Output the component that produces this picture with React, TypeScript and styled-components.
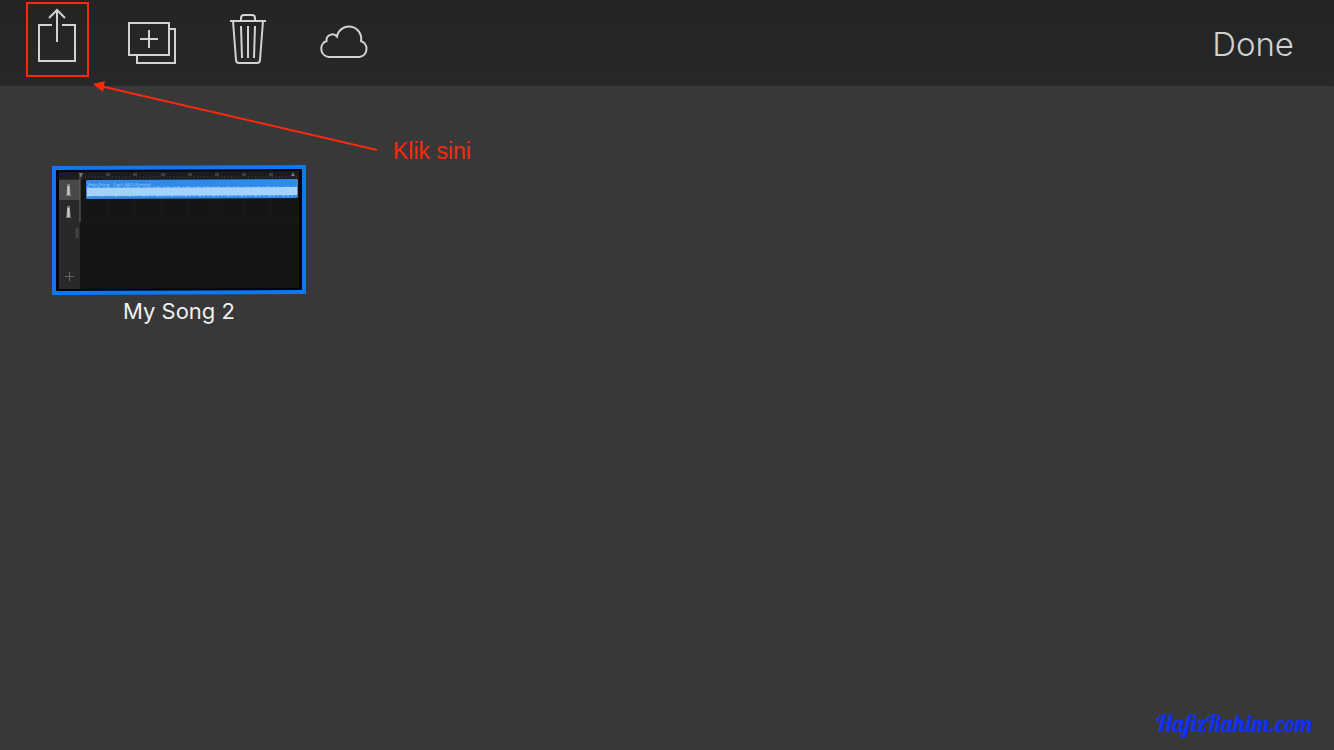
import React from "react";
import styled, { createGlobalStyle } from "styled-components";

const GlobalStyle = createGlobalStyle`
  * { box-sizing: border-box; }
  body { margin: 0; background: #383838; font-family: Inter, "Liberation Sans", sans-serif; }
  button { margin: 0; padding: 0; border: 0; background: none; font: inherit; cursor: pointer; }
  svg { display: block; }
`;

const Page = styled.div`
  position: relative;
  display: flex;
  flex-direction: column;
  min-height: 100vh;
`;

const Toolbar = styled.header`
  display: flex;
  justify-content: space-between;
  align-items: flex-start;
  height: 86px;
  padding: 2px 40px 0 26px;
  background: linear-gradient(#242424, #262829);
`;

const Actions = styled.div`
  display: flex;
  gap: 33px;
`;

const IconButton = styled.button<{ $marked?: boolean }>`
  display: flex;
  width: 63px;
  height: 75px;
  border: 2px solid ${(p) => (p.$marked ? "#fa2a0a" : "transparent")};

  svg {
    width: 59px;
    height: 71px;
    fill: none;
    stroke: #d2d2d2;
    stroke-width: 2;
  }
`;

const DoneButton = styled.button`
  height: 84px;
  color: #d2d2d2;
  font-size: 33px;
  font-weight: 300;
  line-height: 84px;
`;

const Library = styled.main`
  flex: 1;
  display: flex;
  flex-wrap: wrap;
  align-content: flex-start;
  padding: 78px 52px;
`;

const Song = styled.button`
  display: flex;
  flex-direction: column;
  align-items: center;
  width: 254px;
`;

const SongTitle = styled.span`
  color: #f0f0f0;
  font-size: 22px;
  line-height: 32px;
`;

const Arrow = styled.svg`
  position: absolute;
  left: 90px;
  top: 76px;
  width: 290px;
  height: 80px;
  pointer-events: none;
`;

const Hint = styled.span`
  position: absolute;
  left: 393px;
  top: 138px;
  color: #fa2a0a;
  font-family: "Liberation Sans", sans-serif;
  font-size: 23px;
  line-height: 26px;
`;

const Credit = styled.a`
  position: absolute;
  right: 22px;
  bottom: 13px;
  color: #1030f8;
  font-family: Lobster, "Liberation Serif", serif;
  font-size: 24px;
  line-height: 28px;
  text-decoration: none;
`;

const ShareIcon = () => (
  <svg viewBox="28 4 59 71" aria-hidden="true">
    <path d="M52 25H39V61H75V25H62M57 42V10M49 18L57 10L65 18" />
  </svg>
);

const DuplicateIcon = () => (
  <svg viewBox="124 4 59 71" aria-hidden="true">
    <path d="M129 23H169V55H129ZM169 29H175V63H137V55M149 30V48M140 39H158" />
  </svg>
);

const TrashIcon = () => (
  <svg viewBox="220 4 59 71" aria-hidden="true">
    <path d="M230 21H266M241 21V18Q241 15 244 15H252Q255 15 255 18V21M233 21L236 60Q236 63 239 63H257Q260 63 260 60L263 21M241 26L242 58M248 26V58M255 26L254 58" />
  </svg>
);

const CloudIcon = () => (
  <svg viewBox="316 4 59 71" aria-hidden="true">
    <path d="M329 57A8.300 8.300 0 0 1 326.500 41A6 6 0 0 1 337 36.500A12.200 12.200 0 0 1 361 41A8.300 8.300 0 0 1 359.500 57Z" />
  </svg>
);

const bars = [107, 134, 162, 189, 216, 243, 270];
const ticks = Array.from({ length: 64 }, (_, i) => 82 + i * 3.4);
const wave = Array.from({ length: 104 }, (_, i) => ({
  x: 88 + i * 2,
  top: 186 + ((i * 7) % 5) * 0.5,
  bottom: 197 - ((i * 11) % 7) * 0.4,
}));

const Mic = ({ y }: { y: number }) => (
  <g transform={`translate(0 ${y})`}>
    <path d="M67 0H70V4L71 12H66L67 4Z" fill="#7c7d7e" />
    <path d="M68.500 2V11" stroke="#d2d3d4" strokeWidth="2" />
  </g>
);

const SongPreview = () => (
  <svg width="254" height="131" viewBox="52 164 254 131" role="img" aria-label="Song arrangement preview">
    <path d="M52 166L306 165V294L52 295Z" fill="#0f78ee" />
    <path d="M56 170L302 169V290L56 291Z" fill="#02030b" />
    <path d="M59 172L299 171V288L59 289Z" fill="#141615" />
    <path d="M59 172L299 171V179L59 180Z" fill="#1b1c1d" />
    <path d="M59 179H80V289H59Z" fill="#28292b" />
    <path d="M59 180H80V200H59Z" fill="#48494a" />
    <path d="M80 174V222" stroke="#66686a" />
    <path d="M79 173H83L81 178Z" fill="#777" />
    {ticks.map((x) => (
      <path key={x} d={`M${x} 176V178`} stroke="#353738" />
    ))}
    {bars.map((x) => (
      <g key={x}>
        <path d={`M${x} 174V222`} stroke="#1a1c1c" />
        <path d={`M${x - 1} 174.500H${x + 3}`} stroke="#3c3e3f" strokeWidth="3" />
      </g>
    ))}
    <path d="M291 176L293 172L295 176Z" fill="#777" />
    <path d="M80 222H299" stroke="#1a1c1c" />
    <path d="M87 180L297 179L298 180V197L297 198L87 199L86 198V181Z" fill="#3189e8" />
    <path d="M87 188L297 187V195L87 196Z" fill="#acd7ff" />
    <path d={wave.map((w) => `M${w.x} ${w.top}V${w.bottom}`).join("")} stroke="#9ccdfc" />
    <text x="88" y="186" fill="#9dccfa" fontSize="4" fontFamily="Liberation Sans, sans-serif">
      Hafiz Rahim - Track (MLD Release)
    </text>
    <Mic y={184} />
    <Mic y={206} />
    <path d="M77 228V238" stroke="#434446" strokeWidth="3" />
    <path d="M65 276.500H74M69.500 272V281" stroke="#666" />
  </svg>
);

export default function App() {
  return (
    <Page>
      <GlobalStyle />
      <Toolbar>
        <Actions>
          <IconButton $marked aria-label="Share"><ShareIcon /></IconButton>
          <IconButton aria-label="Duplicate"><DuplicateIcon /></IconButton>
          <IconButton aria-label="Delete"><TrashIcon /></IconButton>
          <IconButton aria-label="iCloud"><CloudIcon /></IconButton>
        </Actions>
        <DoneButton>Done</DoneButton>
      </Toolbar>
      <Library>
        <Song>
          <SongPreview />
          <SongTitle>My Song 2</SongTitle>
        </Song>
      </Library>
      <Arrow viewBox="90 76 290 80" aria-hidden="true">
        <path d="M100 86L377 150" stroke="#fa2a0a" strokeWidth="2" />
        <path d="M93 84L105 81L103 92Z" fill="#fa2a0a" />
      </Arrow>
      <Hint>Klik sini</Hint>
      <Credit href="#">HafizRahim.com</Credit>
    </Page>
  );
}
